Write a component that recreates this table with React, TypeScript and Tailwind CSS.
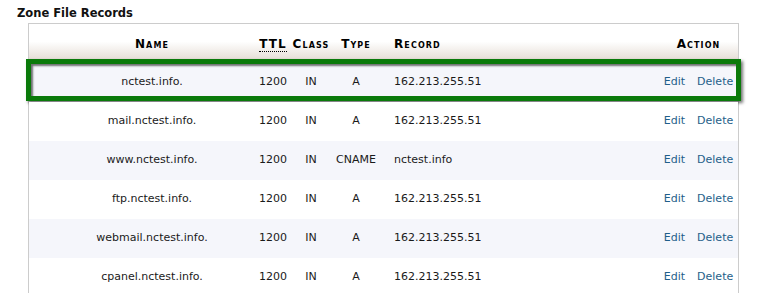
const rows = [
  { name: "nctest.info.", ttl: "1200", cls: "IN", type: "A", record: "162.213.255.51" },
  { name: "mail.nctest.info.", ttl: "1200", cls: "IN", type: "A", record: "162.213.255.51" },
  { name: "www.nctest.info.", ttl: "1200", cls: "IN", type: "CNAME", record: "nctest.info" },
  { name: "ftp.nctest.info.", ttl: "1200", cls: "IN", type: "A", record: "162.213.255.51" },
  { name: "webmail.nctest.info.", ttl: "1200", cls: "IN", type: "A", record: "162.213.255.51" },
  { name: "cpanel.nctest.info.", ttl: "1200", cls: "IN", type: "A", record: "162.213.255.51" },
];

const cols = "grid grid-cols-[225px_38px_38px_52px_258px_97px]";

export default function App() {
  return (
    <div className="h-[293px] w-[759px] overflow-hidden bg-white font-['DejaVu_Sans',sans-serif] text-[#1a1a1a]">
      <h2 className="pl-[17px] pt-[5px] text-[11.5px] font-bold leading-[16px] text-[#111]">
        Zone File Records
      </h2>
      <div className="ml-[28px] mt-[2px] w-[711px] border-x border-t border-[#cccccc]">
        <div
          className={`${cols} h-[39px] items-center bg-gradient-to-b from-white from-45% to-[#e1d8cf] text-[12px] font-bold tracking-[1.1px] text-black [font-variant:small-caps]`}
        >
          <div className="pl-[21px] text-center">Name</div>
          <div className="text-center">
            <abbr title="Time To Live" className="no-underline border-b border-dotted border-black">
              TTL
            </abbr>
          </div>
          <div className="text-center">Class</div>
          <div className="text-center">Type</div>
          <div className="pl-[12px]">Record</div>
          <div className="pl-[20px] text-center">Action</div>
        </div>
        {rows.map((r, i) => (
          <div
            key={r.name}
            className={`${cols} relative h-[39px] items-center text-[11px] ${i % 2 === 0 ? "bg-[#f5f6fb]" : "bg-white"}`}
          >
            <div className="pl-[21px] text-center">{r.name}</div>
            <div className="text-center">{r.ttl}</div>
            <div className="text-center">{r.cls}</div>
            <div className="text-center">{r.type}</div>
            <div className="pl-[12px]">{r.record}</div>
            <div className="flex justify-center gap-[12px] pl-[20px] text-[#1f5f8a]">
              <a href="#">Edit</a>
              <a href="#">Delete</a>
            </div>
            {i === 0 && (
              <div className="pointer-events-none absolute bottom-[1px] -left-[3px] -right-[3px] -top-[4px] border-[5px] border-[#0a7a0a] shadow-[2px_2px_3px_rgba(0,0,0,0.55),inset_2px_2px_2px_rgba(0,0,0,0.55)]" />
            )}
          </div>
        ))}
      </div>
    </div>
  );
}
